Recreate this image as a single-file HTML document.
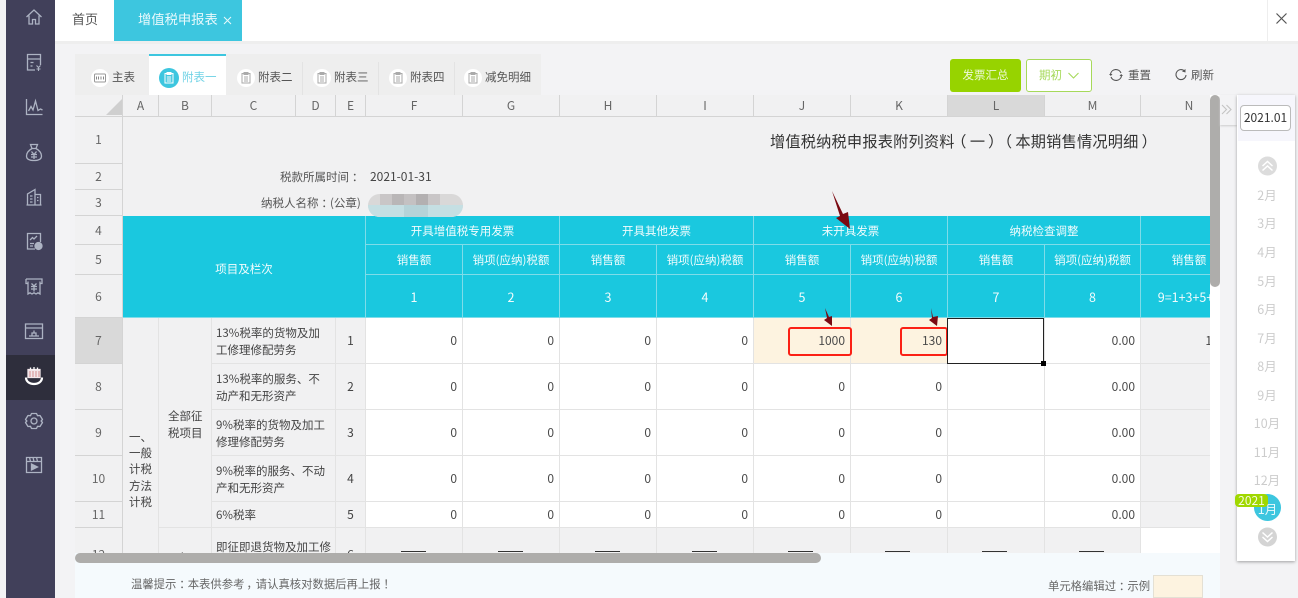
<!DOCTYPE html>
<html lang="zh"><head><meta charset="utf-8"><title>增值税申报表</title>
<style>
*{box-sizing:border-box}
html,body{margin:0;padding:0;width:1298px;height:598px;overflow:hidden;background:#f3f3f5}
body{font:11.5px/1.4 "Noto Sans CJK SC","Liberation Sans",sans-serif;color:#444;position:relative}
.a{position:absolute;white-space:nowrap}
.q{display:inline-block;width:1em;text-align:center;font-feature-settings:"palt"}
svg{position:absolute;overflow:visible;fill:none}
#side svg{stroke:#adb3c3;stroke-width:1.3;width:20px;height:20px;left:18px}
#clip{position:absolute;left:75px;top:95px;width:1135px;height:458px;overflow:hidden;background:#fff}
table{border-collapse:separate;border-spacing:0;table-layout:fixed;width:1163px;font-family:"Noto Sans CJK SC","Liberation Sans",sans-serif;font-size:12px;color:#444}
td{padding:2px 5px 0 0;border-right:1px solid #e3e3e3;border-bottom:1px solid #e3e3e3;background:#fff;text-align:right;overflow:hidden;white-space:nowrap;line-height:16.5px;color:#4a4a4a}
td.h{background:#f1f1f2;text-align:center;padding:2px 0 0;border-color:#d4d4d4;color:#666;font-size:12px}
td.s{background:#d9d9d9}
td.g{background:#f1f1f2;text-align:center;padding:0;color:#444;font-size:11.5px}
td.t{background:#f1f1f2;text-align:left;padding:2px 0 0 4px;color:#444;font-size:11.5px}
td.x{background:#f1f1f2;text-align:center;padding:2px 0 0;color:#444;font-size:12px}
td.c{background:#1ac8df;color:#f2fcfd;text-align:center;padding:2px 0 0;border-color:#7fdce9;font-size:11.5px}
td.d{font-size:12.5px}
td.e{background:#fdf3e0}
.ln{position:absolute;top:456px;width:25px;height:1px;background:#333}
.tb{font-size:11.5px;color:#555;top:69px}
.m{left:1238px;width:58px;text-align:center;color:#ccc;font-size:12.5px;line-height:16px}
.lnk{top:67px;color:#555}
</style></head><body>

<!-- sidebar -->
<div id="side" class="a" style="left:6px;top:0;width:49px;height:598px;background:#41405a">
<div class="a" style="left:0;top:355px;width:49px;height:45px;background:#2e2e3c"></div>
<svg viewBox="0 0 20 20" style="top:7px"><path d="M2.5 10 10 3l7.500 7M5 8.500V17h3.500v-4.500h3V17H15V8.500"/></svg>
<svg viewBox="0 0 20 20" style="top:52px"><path d="M11 18H3.500V2.500h13V13M3.500 7h13M6.500 10.500h3M6.500 14h2"/><path d="M12.500 13.500l2 2 2-2M14.500 15.500V19M12.500 17h4" stroke-width="1.100"/></svg>
<svg viewBox="0 0 20 20" style="top:97px"><path d="M2.500 2v15.500h16M4.500 14 7 9.500 9 13l2.500-9 2.500 9.500 2.500-1.500 2 1"/></svg>
<svg viewBox="0 0 20 20" style="top:142px"><path d="M6.500 2.500h7l-1.500 4H8zM8 6.500C4.500 8.500 2.500 11.500 2.500 14c0 3 2.500 4.500 7.500 4.500s7.500-1.500 7.500-4.500c0-2.500-2-5.500-5.500-7.500zM7.500 9.500l2.500 3 2.500-3M7 12.500h6M7 15h6M10 12.500V17"/></svg>
<svg viewBox="0 0 20 20" style="top:187px"><path d="M3.500 18V7L11 2.500V18zM11 7.500h5.500V18M2.500 18h15M6 9h2.500M6 12h2.500M6 15h2.500M13 10.500h1.500M13 13.500h1.500"/></svg>
<svg viewBox="0 0 20 20" style="top:231px"><path d="M11 18H3.500V2.500h13V11M6 9l2.500-2.500L10 8l3-3M6 12.500h4M6 15h3"/><circle cx="14.500" cy="15" r="3.500" fill="#adb3c3"/></svg>
<svg viewBox="0 0 20 20" style="top:276px"><path d="M2 3h16v4.500h-2M2 3v4.500h2M4 5.500V18l2-1.200 2 1.200 2-1.200 2 1.200 2-1.200 2 1.200V5.500M7.500 7.500 10 10l2.500-2.500M7 10.500h6M7 13h6M10 10v5.500"/></svg>
<svg viewBox="0 0 20 20" style="top:321px"><path d="M1.500 3h17v14.500h-17zM1.500 7h17M5 15h10M8 15v-3h4v3M10 12V9.500"/></svg>
<svg viewBox="0 0 20 20" style="top:366px;stroke:#fff"><path d="M4 3.500h12v8H4z" fill="#f2e6ea" stroke="#f2e6ea"/><path d="M6.500 1.500v2M10 1v3M13.500 1.500v2" stroke="#fff"/><path d="M6 5v6M9 5v6M12 5v6M15 5v6" stroke="#c77" stroke-width=".8"/><path d="M2 11.500c0 4 3.500 6.500 8 6.500s8-2.500 8-6.500" stroke="#fff" stroke-width="2.200"/></svg>
<svg viewBox="0 0 20 20" style="top:411px"><path d="M7.500 2.500h5l1 2.200 2.500-.2 2.500 4-1.400 1.500 1.400 1.500-2.500 4-2.500-.2-1 2.200h-5l-1-2.200-2.500.2-2.500-4 1.400-1.500-1.400-1.500 2.500-4 2.500.2z" stroke-linejoin="round"/><circle cx="10" cy="10" r="3"/></svg>
<svg viewBox="0 0 20 20" style="top:455px"><path d="M2.500 2.500h15v15h-15zM2.500 6.500h15M5.500 2.500l1 4M9 2.500l1 4M12.500 2.500l1 4"/><path d="M7.500 9v6l6-3z" fill="#adb3c3"/></svg>
</div>

<!-- top bar -->
<div class="a" style="left:55px;top:0;width:1243px;height:41px;background:#fff"></div>
<div class="a" style="left:55px;top:41px;width:1243px;height:3px;background:#eee"></div>
<div class="a" style="left:72px;top:10px;font-size:13px;color:#555">首页</div>
<div class="a" style="left:114px;top:0;width:128px;height:41px;background:#3dc6df"></div>
<div class="a" style="left:138px;top:10px;font-size:13.300px;color:#e8f9fc">增值税申报表</div>
<svg style="left:223px;top:16px;width:9px;height:9px" viewBox="0 0 9 9"><path d="M1 1l7 7M8 1 1 8" stroke="#e8f9fc" stroke-width="1"/></svg>
<div class="a" style="left:1267px;top:0;width:1px;height:41px;background:#eee"></div>
<svg style="left:1276px;top:13px;width:11px;height:11px" viewBox="0 0 11 11"><path d="M.5.500l10 10M10.500.500l-10 10" stroke="#555" stroke-width="1.200"/></svg>

<!-- tabs -->
<div class="a" style="left:75px;top:54px;width:466px;height:41px;background:#eee"></div>
<div class="a" style="left:149px;top:54px;width:77px;height:41px;background:#fff;border-top:2px solid #3dc6df"></div>
<div class="a" style="left:302px;top:62px;width:1px;height:33px;background:#e3e3e3"></div>
<div class="a" style="left:378px;top:62px;width:1px;height:33px;background:#e3e3e3"></div>
<div class="a" style="left:454px;top:62px;width:1px;height:33px;background:#e3e3e3"></div>
<svg style="left:91px;top:69px;width:18px;height:18px" viewBox="0 0 18 18"><circle cx="9" cy="9" r="9" fill="#fff"/><rect x="3.500" y="5" width="11" height="8" rx="1" stroke="#999" stroke-width="1"/><path d="M5.500 7.500v3M7.500 7.500v3M10 7.500v3M12.500 7.500v3" stroke="#888" stroke-width="1"/></svg>
<svg style="left:159px;top:68px;width:20px;height:20px" viewBox="0 0 20 20"><circle cx="10" cy="10" r="10" fill="#3dc6df"/><path d="M6 5.500h8V15H6zM8 4.500h4v2H8zM7.800 9h4.400M7.800 11h4.400M7.800 13h4.400" stroke="#fff" stroke-width="1"/></svg>
<svg style="left:237px;top:69px;width:18px;height:18px" viewBox="0 0 18 18"><circle cx="9" cy="9" r="9" fill="#fff"/><path d="M5 4.500h8V14H5zM7 3.500h4v2H7zM7 8h4M7 10h4M7 12h4" stroke="#aaa" stroke-width="1"/></svg>
<svg style="left:313px;top:69px;width:18px;height:18px" viewBox="0 0 18 18"><circle cx="9" cy="9" r="9" fill="#fff"/><path d="M5 4.500h8V14H5zM7 3.500h4v2H7zM7 8h4M7 10h4M7 12h4" stroke="#aaa" stroke-width="1"/></svg>
<svg style="left:389px;top:69px;width:18px;height:18px" viewBox="0 0 18 18"><circle cx="9" cy="9" r="9" fill="#fff"/><path d="M5 4.500h8V14H5zM7 3.500h4v2H7zM7 8h4M7 10h4M7 12h4" stroke="#aaa" stroke-width="1"/></svg>
<svg style="left:464px;top:69px;width:18px;height:18px" viewBox="0 0 18 18"><circle cx="9" cy="9" r="9" fill="#fff"/><path d="M5 4.500h8V14H5zM7 3.500h4v2H7zM7 8h4M7 10h4M7 12h4" stroke="#aaa" stroke-width="1"/></svg>
<div class="a tb" style="left:112px">主表</div>
<div class="a tb" style="left:182px;color:#72d3e6">附表一</div>
<div class="a tb" style="left:258px">附表二</div>
<div class="a tb" style="left:334px">附表三</div>
<div class="a tb" style="left:410px">附表四</div>
<div class="a tb" style="left:485px">减免明细</div>

<!-- buttons -->
<div class="a" style="left:950px;top:59px;width:71px;height:33px;background:#97d300;border-radius:3px;color:#eef9d8;text-align:center;line-height:32px">发票汇总</div>
<div class="a" style="left:1026px;top:59px;width:66px;height:33px;background:#fff;border:1px solid #a6d95a;border-radius:3px;color:#a6d95a;line-height:30px;padding-left:12px">期初</div>
<svg style="left:1068px;top:72px;width:11px;height:7px" viewBox="0 0 11 7"><path d="M.5 1l5 5 5-5" stroke="#a6d95a" stroke-width="1.100"/></svg>
<svg style="left:1109px;top:68px;width:14px;height:14px" viewBox="0 0 14 14"><path d="M1.500 6A5.500 5.500 0 0 1 12 5M12.500 8A5.500 5.500 0 0 1 2 9" stroke="#555" stroke-width="1.100"/><path d="M0 6h3.500L1.800 8zM14 8h-3.500L12.200 6z" fill="#555"/></svg>
<div class="a lnk" style="left:1128px">重置</div>
<svg style="left:1174px;top:68px;width:14px;height:14px" viewBox="0 0 14 14"><path d="M10.500 3A5 5 0 1 0 12 7" stroke="#555" stroke-width="1.100"/><path d="M8 3.500l3.500 1V1z" fill="#555"/></svg>
<div class="a lnk" style="left:1191px">刷新</div>

<!-- sheet -->
<div id="clip">
<table>
<colgroup><col style="width:48px"><col style="width:36px"><col style="width:53px"><col style="width:84px"><col style="width:40px"><col style="width:30px"><col style="width:97px"><col style="width:97px"><col style="width:97px"><col style="width:97px"><col style="width:97px"><col style="width:97px"><col style="width:97px"><col style="width:96px"><col style="width:97px"></colgroup>
<tr style="height:22px"><td class="h"></td><td class="h">A</td><td class="h">B</td><td class="h">C</td><td class="h">D</td><td class="h">E</td><td class="h">F</td><td class="h">G</td><td class="h">H</td><td class="h">I</td><td class="h">J</td><td class="h">K</td><td class="h s">L</td><td class="h">M</td><td class="h">N</td></tr>
<tr style="height:47px"><td class="h" style="padding-top:0">1</td><td colspan="14" class="g" style="border:0"></td></tr>
<tr style="height:26px"><td class="h">2</td><td colspan="14" class="g" style="border:0"></td></tr>
<tr style="height:26px"><td class="h">3</td><td colspan="14" class="g" style="border:0"></td></tr>
<tr style="height:29px"><td class="h">4</td><td colspan="5" rowspan="3" class="c" style="padding-top:5px">项目及栏次</td><td colspan="2" class="c">开具增值税专用发票</td><td colspan="2" class="c">开具其他发票</td><td colspan="2" class="c">未开具发票</td><td colspan="2" class="c">纳税检查调整</td><td class="c"></td></tr>
<tr style="height:30px"><td class="h">5</td><td class="c">销售额</td><td class="c">销项(应纳)税额</td><td class="c">销售额</td><td class="c">销项(应纳)税额</td><td class="c">销售额</td><td class="c">销项(应纳)税额</td><td class="c">销售额</td><td class="c">销项(应纳)税额</td><td class="c">销售额</td></tr>
<tr style="height:43px"><td class="h">6</td><td class="c d">1</td><td class="c d">2</td><td class="c d">3</td><td class="c d">4</td><td class="c d">5</td><td class="c d">6</td><td class="c d">7</td><td class="c d">8</td><td class="c d">9=1+3+5+7</td></tr>
<tr style="height:46px"><td class="h s">7</td><td rowspan="6" class="g"></td><td rowspan="5" class="g"></td><td class="t" colspan="2">13%税率的货物及加<br>工修理修配劳务</td><td class="x">1</td><td>0</td><td>0</td><td>0</td><td>0</td><td class="e">1000</td><td class="e">130</td><td></td><td>0.00</td><td class="x" style="text-align:right;padding-right:5px">1130</td></tr>
<tr style="height:46px"><td class="h">8</td><td class="t" colspan="2">13%税率的服务、不<br>动产和无形资产</td><td class="x">2</td><td>0</td><td>0</td><td>0</td><td>0</td><td>0</td><td>0</td><td></td><td>0.00</td><td class="g"></td></tr>
<tr style="height:46px"><td class="h">9</td><td class="t" colspan="2">9%税率的货物及加工<br>修理修配劳务</td><td class="x">3</td><td>0</td><td>0</td><td>0</td><td>0</td><td>0</td><td>0</td><td></td><td>0.00</td><td class="g"></td></tr>
<tr style="height:46px"><td class="h">10</td><td class="t" colspan="2">9%税率的服务、不动<br>产和无形资产</td><td class="x">4</td><td>0</td><td>0</td><td>0</td><td>0</td><td>0</td><td>0</td><td></td><td>0.00</td><td class="g"></td></tr>
<tr style="height:26px"><td class="h">11</td><td class="t" colspan="2">6%税率</td><td class="x">5</td><td>0</td><td>0</td><td>0</td><td>0</td><td>0</td><td>0</td><td></td><td>0.00</td><td class="g"></td></tr>
<tr style="height:46px"><td class="h" style="padding-top:0">12</td><td class="g" style="vertical-align:top;padding-top:22px">即征即<br>退项目</td><td class="t" colspan="2" style="padding-top:0">即征即退货物及加工修<br>理修配劳务</td><td class="x" style="padding-top:0">6</td><td class="g"></td><td class="g"></td><td class="g"></td><td class="g"></td><td class="g"></td><td class="g"></td><td class="g"></td><td class="g"></td><td style="border:0"></td></tr>
</table>
<div class="ln" style="left:326px"></div><div class="ln" style="left:423px"></div><div class="ln" style="left:520px"></div><div class="ln" style="left:617px"></div><div class="ln" style="left:713px"></div><div class="ln" style="left:810px"></div><div class="ln" style="left:907px"></div><div class="ln" style="left:1004px"></div>
</div>

<!-- sheet overlays -->
<div class="a" style="left:106px;top:99px;width:16px;height:16px;background:#cfcfcf;clip-path:polygon(100% 0,100% 100%,0 100%)"></div>
<div class="a" style="left:770px;top:131px;font-size:15.200px;color:#333;letter-spacing:.2px">增值税纳税申报表附列资料<span class="q">（</span><span class="q">一</span><span class="q">）</span><span class="q">（</span>本期销售情况明细<span class="q">）</span></div>
<div class="a" style="left:280px;top:169px;color:#555">税款所属时间<span class="q">：</span></div>
<div class="a" style="left:370px;top:169px;font-size:12px;color:#444">2021-01-31</div>
<div class="a" style="left:261px;top:195px;color:#555">纳税人名称<span class="q">：</span>(公章)</div>
<div class="a" style="left:368px;top:194px;width:95px;height:23px;border-radius:12px;overflow:hidden;background:#d9d8d8">
 <div class="a" style="left:12px;top:0;width:12px;height:11px;background:#c9c6c7"></div>
 <div class="a" style="left:24px;top:0;width:12px;height:11px;background:#b9b6b7"></div>
 <div class="a" style="left:36px;top:0;width:12px;height:11px;background:#c4c1c2"></div>
 <div class="a" style="left:48px;top:0;width:12px;height:11px;background:#b3b0b1"></div>
 <div class="a" style="left:60px;top:0;width:12px;height:11px;background:#c9c6c7"></div>
 <div class="a" style="left:0;top:11px;width:95px;height:12px;background:#c5dfe3"></div>
 <div class="a" style="left:36px;top:11px;width:24px;height:12px;background:#b6d3d8"></div>
</div>
<div class="a" style="left:129px;top:429px;width:28px;line-height:16.200px;color:#444;white-space:normal">一、<br>一般<br>计税<br>方法<br>计税</div>
<div class="a" style="left:168px;top:408px;line-height:16.500px;color:#444">全部征<br>税项目</div>

<!-- red boxes -->
<div class="a" style="left:788px;top:327px;width:64px;height:29px;border:2.500px solid #fb2015;border-radius:3px"></div>
<div class="a" style="left:900px;top:327px;width:48px;height:29px;border:2.500px solid #fb2015;border-radius:3px"></div>
<!-- selected cell -->
<div class="a" style="left:947px;top:318px;width:97px;height:46px;border:1px solid #222;background:#fff"></div>
<div class="a" style="left:1041px;top:361px;width:5px;height:5px;background:#000"></div>
<!-- arrows -->
<svg style="left:0;top:0;width:1298px;height:598px" viewBox="0 0 1298 598"><path fill="#7b0a12" d="M832 191 843 214 848 212 850 229 836 218 840 216zM825 308 829 317 832 316 832 326 824 320 827 318zM931 308 933 317 938 316 937 326 929 320 932 318z"/></svg>

<!-- scrollbars and footer -->
<div class="a" style="left:1210px;top:95px;width:10px;height:458px;background:#fff"></div>
<div class="a" style="left:1210px;top:95px;width:10px;height:192px;background:#aeadab;border-radius:5px"></div>
<div class="a" style="left:75px;top:553px;width:1145px;height:45px;background:#f5fafd"></div>
<div class="a" style="left:75px;top:553px;width:746px;height:10px;background:#aeadab;border-radius:5px"></div>
<div class="a" style="left:131px;top:577px;color:#666;font-size:11.350px">温馨提示<span class="q">：</span>本表供参考<span class="q">，</span>请认真核对数据后再上报<span class="q">！</span></div>
<div class="a" style="left:1048px;top:579px;color:#666;font-size:11.350px">单元格编辑过<span class="q">：</span>示例</div>
<div class="a" style="left:1153px;top:575px;width:50px;height:23px;background:#fdf3e0;border:1px solid #e4e0d4"></div>

<!-- right panel -->
<div class="a" style="left:1220px;top:95px;width:17px;height:30px;background:#f3f3f5;box-shadow:0 1px 2px #ccc"></div>
<svg style="left:1221px;top:104px;width:11px;height:11px" viewBox="0 0 11 11"><path d="M1 1l4.500 4.500L1 10M5.500 1 10 5.500 5.500 10" stroke="#c4c4c4" stroke-width="1.100"/></svg>
<div class="a" style="left:1237px;top:95px;width:58px;height:466px;background:#fff;box-shadow:0 1px 3px rgba(0,0,0,.35)"></div>
<div class="a" style="left:1238px;top:95px;width:57px;height:46px;background:#f6f6fc"></div>
<div class="a" style="left:1240px;top:105px;width:51px;height:26px;background:#fff;border:1px solid #bbb;border-radius:4px;text-align:center;font-size:12px;line-height:24px;color:#333">2021.01</div>
<svg style="left:1258px;top:156px;width:19px;height:20px" viewBox="0 0 19 20"><circle cx="9.500" cy="10" r="9.500" fill="#dcdcdc"/><path d="M4.500 10l5-4.500 5 4.500M4.500 14.500l5-4.500 5 4.500" stroke="#fff" stroke-width="1.500"/></svg>
<div class="a m" style="top:187px">2月</div>
<div class="a m" style="top:215px">3月</div>
<div class="a m" style="top:244px">4月</div>
<div class="a m" style="top:273px">5月</div>
<div class="a m" style="top:301px">6月</div>
<div class="a m" style="top:330px">7月</div>
<div class="a m" style="top:358px">8月</div>
<div class="a m" style="top:387px">9月</div>
<div class="a m" style="top:415px">10月</div>
<div class="a m" style="top:444px">11月</div>
<div class="a m" style="top:472px">12月</div>
<div class="a" style="left:1254px;top:494px;width:27px;height:27px;border-radius:50%;background:#3dc6df;color:#e8f9fc;text-align:center;line-height:30px;font-size:12.500px">1月</div>
<div class="a" style="left:1235px;top:494px;width:33px;height:13px;border-radius:4px;background:#a0d800;color:#f5fbe0;text-align:center;font-size:12px;line-height:13px">2021</div>
<svg style="left:1258px;top:527px;width:19px;height:20px" viewBox="0 0 19 20"><circle cx="9.500" cy="10" r="9.500" fill="#d4d4d4"/><path d="M4.500 5.500l5 4.500 5-4.500M4.500 10l5 4.500 5-4.500" stroke="#fff" stroke-width="1.500"/></svg>
</body></html>
